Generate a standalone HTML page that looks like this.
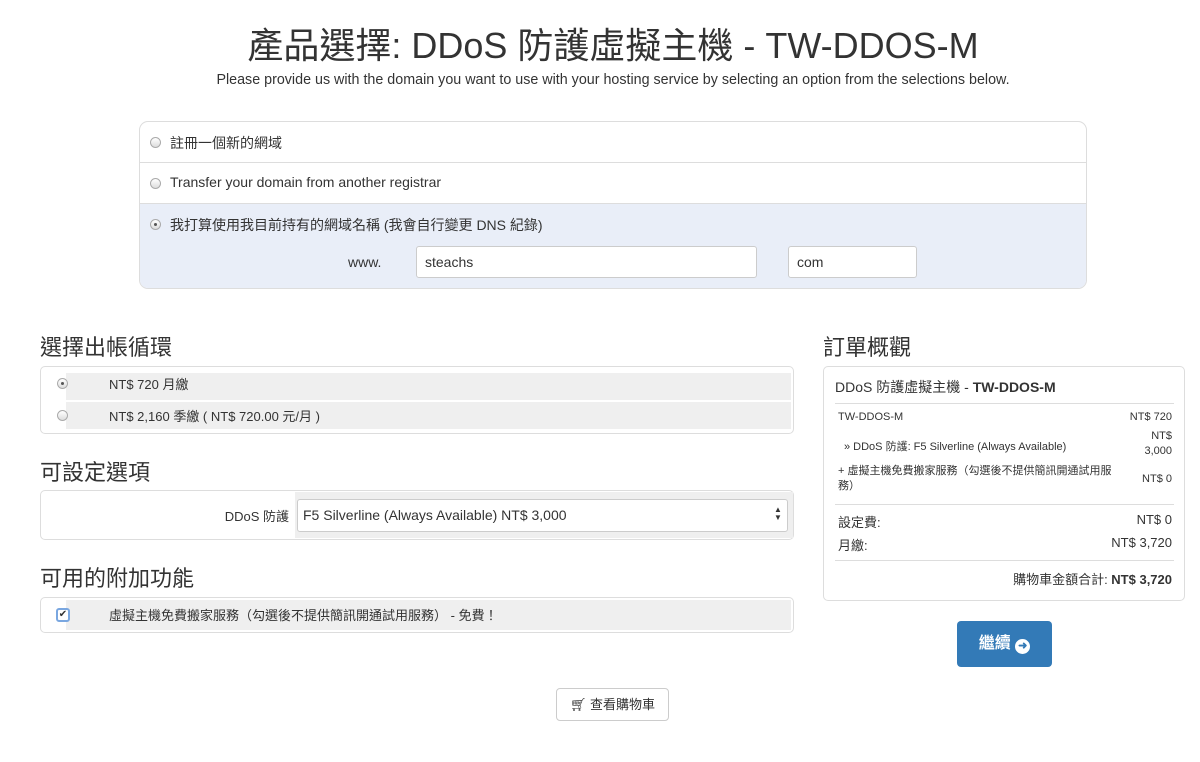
<!DOCTYPE html><html><head><meta charset="utf-8"><style>
*{box-sizing:border-box;margin:0;padding:0}
body{width:1200px;height:762px;background:#fff;font-family:"Liberation Sans","Noto Sans CJK TC",sans-serif;color:#333;position:relative;overflow:hidden}
.a{position:absolute}
.h{font-size:22px;color:#333}
.box{position:absolute;border:1px solid #ddd;border-radius:5px;background:#fff}
.radio{position:absolute;width:11px;height:11px;border-radius:50%;border:1px solid #aaa;background:linear-gradient(#fff,#ddd)}
.radio.on::after{content:"";position:absolute;left:3px;top:3px;width:3px;height:3px;border-radius:50%;background:#555}
.inp{position:absolute;border:1px solid #ccc;border-radius:3px;background:#fff;font-size:14px;padding-left:8px;line-height:30px}
</style></head><body>
<div class="a" style="left:0;width:1226px;top:17px;text-align:center;font-size:36px;color:#333">產品選擇: DDoS 防護虛擬主機 - TW-DDOS-M</div>
<div class="a" style="left:0;width:1226px;top:72px;text-align:center;font-size:14.3px">Please provide us with the domain you want to use with your hosting service by selecting an option from the selections below.</div>

<div class="box" style="left:139px;top:121px;width:948px;height:168px;border-radius:9px;overflow:hidden">
 <div class="a" style="left:0;top:0;width:100%;height:41px;border-bottom:1px solid #ddd"></div>
 <div class="a" style="left:0;top:41px;width:100%;height:41px;border-bottom:1px solid #ddd"></div>
 <div class="a" style="left:0;top:82px;width:100%;height:86px;background:#e9eef8"></div>
 <div class="radio" style="left:10px;top:15px"></div><div class="a" style="left:30px;top:11px;font-size:14px">註冊一個新的網域</div>
 <div class="radio" style="left:10px;top:56px"></div><div class="a" style="left:30px;top:52px;font-size:14px">Transfer your domain from another registrar</div>
 <div class="radio on" style="left:10px;top:97px"></div><div class="a" style="left:30px;top:93px;font-size:14px">我打算使用我目前持有的網域名稱 (我會自行變更 DNS 紀錄)</div>
 <div class="a" style="left:208px;top:132px;font-size:14px">www.</div>
 <div class="inp" style="left:276px;top:124px;width:341px;height:32px">steachs</div>
 <div class="inp" style="left:648px;top:124px;width:129px;height:32px">com</div>
</div>

<div class="a h" style="left:40px;top:330px">選擇出帳循環</div>
<div class="box" style="left:40px;top:366px;width:754px;height:68px">
 <div class="a" style="left:25px;top:6px;width:725px;height:27px;background:#efefef"></div>
 <div class="a" style="left:25px;top:35px;width:725px;height:27px;background:#efefef"></div>
 <div class="radio on" style="left:16px;top:11px"></div>
 <div class="radio" style="left:16px;top:43px"></div>
 <div class="a" style="left:68px;top:7px;font-size:13px">NT$ 720 月繳</div>
 <div class="a" style="left:68px;top:39px;font-size:13px">NT$ 2,160 季繳 ( NT$ 720.00 元/月 )</div>
</div>

<div class="a h" style="left:40px;top:455px">可設定選項</div>
<div class="box" style="left:40px;top:490px;width:754px;height:50px">
 <div class="a" style="left:170px;top:15px;width:78px;text-align:right;font-size:13px">DDoS 防護</div>
 <div class="a" style="left:254px;top:1px;width:498px;height:46px;background:#efefef"></div>
 <div class="inp" style="left:256px;top:8px;width:491px;height:33px;font-size:14px;line-height:31px;padding-left:5px">F5 Silverline (Always Available) NT$ 3,000</div>
 <div class="a" style="left:733px;top:15px;font-size:8px;line-height:8px">▲<br>▼</div>
</div>

<div class="a h" style="left:40px;top:561px">可用的附加功能</div>
<div class="box" style="left:40px;top:597px;width:754px;height:36px">
 <div class="a" style="left:25px;top:2px;width:725px;height:30px;background:#efefef"></div>
 <div class="a" style="left:15px;top:10px;width:14px;height:14px;border:2px solid #7aa7e0;border-radius:3px;background:#fff;font-size:10px;line-height:10px;text-align:center">✔</div>
 <div class="a" style="left:68px;top:7px;font-size:13px">虛擬主機免費搬家服務（勾選後不提供簡訊開通試用服務） - 免費！</div>
</div>

<div class="a h" style="left:823px;top:330px">訂單概觀</div>
<div class="box" style="left:823px;top:366px;width:362px;height:235px">
 <div class="a" style="left:11px;top:10px;font-size:14px">DDoS 防護虛擬主機 - <b>TW-DDOS-M</b></div>
 <div class="a" style="left:11px;top:36px;width:339px;border-top:1px solid #ddd"></div>
 <div class="a" style="left:14px;top:44px;font-size:11px">TW-DDOS-M</div><div class="a" style="right:12px;top:44px;font-size:11px">NT$ 720</div>
 <div class="a" style="left:20px;top:71px;font-size:11px">» DDoS 防護: F5 Silverline (Always Available)</div><div class="a" style="right:12px;top:62px;font-size:11px;text-align:right;line-height:15px">NT$<br>3,000</div>
 <div class="a" style="left:14px;top:97px;font-size:11px;width:280px;line-height:15px">+ 虛擬主機免費搬家服務（勾選後不提供簡訊開通試用服務）</div><div class="a" style="right:12px;top:106px;font-size:11px">NT$ 0</div>
 <div class="a" style="left:11px;top:137px;width:339px;border-top:1px solid #ddd"></div>
 <div class="a" style="left:14px;top:145px;font-size:13px">設定費:</div><div class="a" style="right:12px;top:145px;font-size:13px">NT$ 0</div>
 <div class="a" style="left:14px;top:168px;font-size:13px">月繳:</div><div class="a" style="right:12px;top:168px;font-size:13px">NT$ 3,720</div>
 <div class="a" style="left:11px;top:193px;width:339px;border-top:1px solid #ddd"></div>
 <div class="a" style="right:12px;top:202px;font-size:13px">購物車金額合計: <b>NT$ 3,720</b></div>
</div>
<div class="a" style="left:957px;top:621px;width:95px;height:46px;background:#337ab7;border-radius:4px;color:#fff;font-weight:bold;font-size:16px;line-height:46px;text-align:center">繼續 <span style="display:inline-block;width:15px;height:15px;border-radius:50%;background:#fff;color:#337ab7;font-size:11px;line-height:15px;vertical-align:-1px">➜</span></div>
<div class="a" style="left:556px;top:688px;width:113px;height:33px;border:1px solid #ccc;border-radius:4px;font-size:13px;line-height:31px;text-align:center">🛒︎ 查看購物車</div>
</body></html>
